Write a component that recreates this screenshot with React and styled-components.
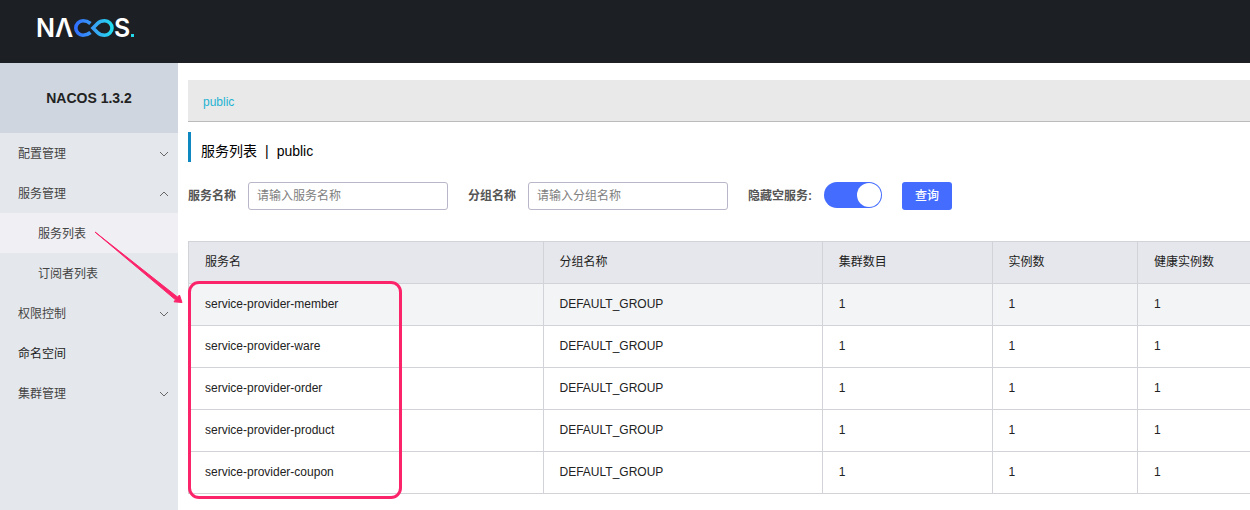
import React, { useState } from "react";
import styled, { createGlobalStyle } from "styled-components";

const GlobalStyle = createGlobalStyle`
  *, *::before, *::after { box-sizing: border-box; }
  body {
    margin: 0;
    background: #fff;
    color: #333;
    font-family: "Liberation Sans", "Noto Sans CJK SC", sans-serif;
    font-size: 12px;
    line-height: 18px;
  }
  button, input { font: inherit; }
`;

const Page = styled.div`
  display: flex;
  flex-direction: column;
  min-height: 100vh;
  overflow-x: hidden;
`;

const TopBar = styled.header`
  display: flex;
  align-items: center;
  height: 63px;
  padding: 0 36px;
  background: #1c2024;
`;

const HomeLink = styled.a`
  display: block;
  height: 32px;
  margin-bottom: 7px;
`;

const Body = styled.div`
  position: relative;
  display: flex;
  flex: 1;
`;

const Sidebar = styled.nav`
  flex: 0 0 178px;
  background: #e4e8ed;
`;

const Version = styled.h1`
  margin: 0;
  height: 70px;
  line-height: 70px;
  font-size: 14px;
  font-weight: 700;
  text-align: center;
  color: #222;
  background: #cfd6df;
`;

const Menu = styled.ul`
  margin: 0;
  padding: 0;
  list-style: none;
`;

const MenuToggle = styled.button`
  display: flex;
  align-items: center;
  justify-content: space-between;
  width: 100%;
  height: 40px;
  padding: 2px 9px 0 18px;
  border: 0;
  background: none;
  color: #444;
  cursor: pointer;
`;

const MenuLink = styled.a`
  display: flex;
  align-items: center;
  height: 40px;
  padding-top: 2px;
  padding-left: ${(p) => (p.$nested ? 38 : 18)}px;
  color: ${(p) => (p.$nested ? "#444" : "#222")};
  background: ${(p) => (p.$active ? "#f0eff4" : "transparent")};
  text-decoration: none;
`;

const Main = styled.main`
  flex: 1;
  min-width: 0;
  padding: 17px 0 16px 10px;
`;

const NamespaceBar = styled.div`
  display: flex;
  align-items: center;
  height: 42px;
  padding: 2px 15px 0;
  background: #e9e9e9;
  border-bottom: 1px solid #bbb;
`;

const NamespaceLink = styled.a`
  color: #1fb3d3;
  text-decoration: none;
`;

const Title = styled.h2`
  display: flex;
  gap: 8px;
  margin: 10px 0 20px;
  padding: 8px 0 0 10px;
  height: 30px;
  border-left: 3px solid #0f87c1;
  font-size: 14px;
  line-height: 22px;
  font-weight: 400;
  color: #000;
`;

const Filters = styled.form`
  display: flex;
  align-items: center;
  gap: 20px;
  height: 28px;
  margin-bottom: 31px;
`;

const Field = styled.div`
  display: flex;
  align-items: center;
  gap: 12px;
  height: 28px;
`;

const Label = styled.label`
  font-weight: 700;
  color: #555;
  white-space: nowrap;
`;

const TextInput = styled.input`
  width: 200px;
  height: 28px;
  padding: 0 8px;
  border: 1px solid #b8b6c8;
  border-radius: 3px;
  background: #fff;
  color: #333;
  &::placeholder { color: #808080; opacity: 1; }
`;

const Switch = styled.input`
  appearance: none;
  display: flex;
  align-items: center;
  align-self: flex-start;
  justify-content: ${(p) => (p.checked ? "flex-end" : "flex-start")};
  width: 58px;
  height: 26px;
  margin: 0;
  padding: 1px;
  border-radius: 13px;
  background: ${(p) => (p.checked ? "#446dff" : "#c4c6cf")};
  cursor: pointer;
  &::before {
    content: "";
    width: 24px;
    height: 24px;
    border-radius: 50%;
    background: #fff;
  }
`;

const SearchButton = styled.button`
  height: 28px;
  width: 50px;
  padding: 0;
  border: 0;
  border-radius: 3px;
  background: #446dff;
  color: #fff;
  font-weight: 500;
  cursor: pointer;
`;

const TableArea = styled.div`
  position: relative;
`;

const Table = styled.table`
  width: 100%;
  table-layout: fixed;
  border-collapse: collapse;
  color: #222;
`;

const Col = styled.col`
  width: ${(p) => p.$width};
`;

const Row = styled.tr`
  height: 42px;
  background: ${(p) => (p.$tone === "head" ? "#e6e7ec" : p.$tone === "hover" ? "#f3f4f6" : "#fff")};
`;

const cell = `
  padding: 0 16px 2px;
  border: 1px solid #d2d3d8;
  font-weight: 400;
  text-align: left;
  white-space: nowrap;
  &:last-child { border-right: 0; }
`;
const HeadCell = styled.th`${cell}`;
const Cell = styled.td`${cell}`;

const Highlight = styled.div`
  position: absolute;
  top: 40px;
  left: 0;
  width: 214px;
  height: 218px;
  border: 3px solid #fb246a;
  border-radius: 11px;
  pointer-events: none;
`;

const Arrow = styled.svg`
  position: absolute;
  top: 165px;
  left: 92px;
  pointer-events: none;
`;

function Logo() {
  return (
    <svg width="102" height="32" viewBox="0 0 102 32" role="img" aria-label="NACOS">
      <defs>
        <linearGradient id="loop" gradientUnits="userSpaceOnUse" x1="38" y1="0" x2="78" y2="0">
          <stop offset="0" stopColor="#2f6bff" />
          <stop offset="0.5" stopColor="#3aa0f5" />
          <stop offset="1" stopColor="#1fe0ee" />
        </linearGradient>
      </defs>
      <g fill="#fff" fontFamily="Inter, sans-serif" fontWeight="600" fontSize="25">
        <text x="0" y="25">N</text>
        <text x="19" y="25">Λ</text>
        <text x="78" y="25">S</text>
      </g>
      <g fill="none" stroke="url(#loop)" strokeWidth="3.600">
        <path d="M54.500 11.500 C52 9.500 50 8.800 47 8.800 A7.200 7.200 0 0 0 47 23.200 C50 23.200 52 22.500 54.500 20.500" />
        <path d="M57 16 L61.500 11.500 C63.500 9.500 66 8.800 68.800 8.800 A7.200 7.200 0 0 1 68.800 23.200 C66 23.200 63.500 22.500 61.500 20.500 Z" />
      </g>
      <rect x="95" y="22" width="3" height="3" fill="#22d8ea" />
    </svg>
  );
}

function Chevron({ open }) {
  return (
    <svg width="10" height="6" viewBox="0 0 10 6" fill="none" stroke="#666" aria-hidden="true">
      <path d={open ? "M1 5 L5 1 L9 5" : "M1 1 L5 5 L9 1"} />
    </svg>
  );
}

const menu = [
  { label: "配置管理", children: [] },
  { label: "服务管理", children: ["服务列表", "订阅者列表"] },
  { label: "权限控制", children: [] },
  { label: "命名空间" },
  { label: "集群管理", children: [] },
];

const columns = [
  ["服务名", "33.4%"],
  ["分组名称", "26.3%"],
  ["集群数目", "16%"],
  ["实例数", "13.7%"],
  ["健康实例数", "auto"],
];

const services = ["member", "ware", "order", "product", "coupon"].map((n) => [
  `service-provider-${n}`,
  "DEFAULT_GROUP",
  1,
  1,
  1,
]);

export default function App() {
  const [opened, setOpened] = useState("服务管理");
  const [hideEmpty, setHideEmpty] = useState(true);

  return (
    <Page>
      <GlobalStyle />
      <TopBar>
        <HomeLink href="#home"><Logo /></HomeLink>
      </TopBar>
      <Body>
        <Sidebar>
          <Version>NACOS 1.3.2</Version>
          <Menu>
            {menu.map(({ label, children }) => (
              <li key={label}>
                {children ? (
                  <MenuToggle
                    type="button"
                    aria-expanded={opened === label}
                    onClick={() => setOpened(opened === label ? "" : label)}
                  >
                    {label}
                    <Chevron open={opened === label} />
                  </MenuToggle>
                ) : (
                  <MenuLink href="#namespace">{label}</MenuLink>
                )}
                {children && opened === label && (
                  <Menu>
                    {children.map((item, i) => (
                      <li key={item}>
                        <MenuLink href="#services" $nested $active={i === 0}>{item}</MenuLink>
                      </li>
                    ))}
                  </Menu>
                )}
              </li>
            ))}
          </Menu>
        </Sidebar>
        <Main>
          <NamespaceBar>
            <NamespaceLink href="#public">public</NamespaceLink>
          </NamespaceBar>
          <Title>
            <span>服务列表</span>
            <span>|</span>
            <span>public</span>
          </Title>
          <Filters onSubmit={(e) => e.preventDefault()}>
            <Field>
              <Label htmlFor="service">服务名称</Label>
              <TextInput id="service" placeholder="请输入服务名称" />
            </Field>
            <Field>
              <Label htmlFor="group">分组名称</Label>
              <TextInput id="group" placeholder="请输入分组名称" />
            </Field>
            <Field>
              <Label htmlFor="hide">隐藏空服务:</Label>
              <Switch
                id="hide"
                type="checkbox"
                role="switch"
                checked={hideEmpty}
                onChange={(e) => setHideEmpty(e.target.checked)}
              />
            </Field>
            <SearchButton type="submit">查询</SearchButton>
          </Filters>
          <TableArea>
            <Table>
              <colgroup>
                {columns.map(([name, width]) => <Col key={name} $width={width} />)}
              </colgroup>
              <thead>
                <Row $tone="head">
                  {columns.map(([name]) => <HeadCell key={name} scope="col">{name}</HeadCell>)}
                </Row>
              </thead>
              <tbody>
                {services.map((row, r) => (
                  <Row key={row[0]} $tone={r === 0 ? "hover" : "plain"}>
                    {row.map((value, i) => <Cell key={i}>{value}</Cell>)}
                  </Row>
                ))}
              </tbody>
            </Table>
            <Highlight />
          </TableArea>
        </Main>
        <Arrow width="94" height="78" viewBox="0 0 94 78" aria-hidden="true">
          <path d="M3 4 L85.500 69 L87.500 67 L90 74.500 L82 73.800 L83.500 71.800 Z" fill="#fb246a" stroke="#fb246a" strokeLinejoin="round" />
        </Arrow>
      </Body>
    </Page>
  );
}
